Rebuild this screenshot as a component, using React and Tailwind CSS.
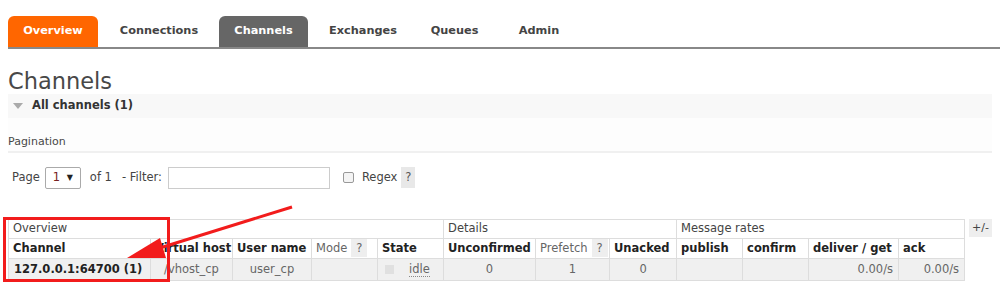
import React from "react";

const tabs = [
  { label: "Overview", ml: "", w: "w-[90px]", cls: "bg-[#ff6600] text-white rounded-t-[6px]" },
  { label: "Connections", ml: "ml-[8px]", w: "w-[106px]", cls: "text-[#444]" },
  { label: "Channels", ml: "ml-[7px]", w: "w-[89px]", cls: "bg-[#666] text-white rounded-t-[6px]" },
  { label: "Exchanges", ml: "ml-[7px]", w: "w-[96px]", cls: "text-[#444]" },
  { label: "Queues", ml: "ml-[8px]", w: "w-[71px]", cls: "text-[#444]" },
  { label: "Admin", ml: "ml-[8px]", w: "w-[82px]", cls: "text-[#444]" },
];

function Help() {
  return (
    <span className="inline-block bg-[#eee] text-[#666] px-[5px] leading-[18px] ml-[4px]">?</span>
  );
}

function Th({ children, weak }) {
  const tone = weak ? "font-normal text-[#666]" : "font-bold text-[#222]";
  return (
    <th className={"border border-[#ddd] bg-white px-[4px] h-[20px] text-left whitespace-nowrap " + tone}>
      {children}
    </th>
  );
}

function Td({ children, align = "text-left", strong }) {
  const tone = strong ? "font-bold text-[#222]" : "text-[#666]";
  return (
    <td className={"border border-[#ddd] bg-[#f0f0f0] px-[5px] h-[22px] whitespace-nowrap " + align + " " + tone}>
      {children}
    </td>
  );
}

export default function App() {
  return (
    <div className="relative w-[1000px] h-[292px] overflow-hidden bg-white font-['DejaVu_Sans',sans-serif] text-[11px] text-[#444]">
      {/* tabs */}
      <div className="flex items-end pt-[16px] border-b-2 border-[#888] ml-[8px]">
        {tabs.map((t) => (
          <div
            key={t.label}
            className={`${t.w} ${t.cls} ${t.ml} h-[31px] flex items-center justify-center font-bold text-[11.3px]`}
          >
            {t.label}
          </div>
        ))}
      </div>

      <div className="px-[8px]">
        <h1 className="text-[22.5px] leading-[26px] text-[#484848] mt-[19px]">Channels</h1>
        <div className="h-[24px] bg-[#f8f8f8] flex items-center">
          <svg width="10" height="6" viewBox="0 0 10 6" className="ml-[5px]">
            <polygon points="0,0 10,0 5,6" fill="#aaa" />
          </svg>
          <span className="ml-[9px] font-bold text-[11.5px] text-[#333]">All channels (1)</span>
        </div>
        <div className="bg-[#fdfdfd] pt-[17px] pb-[2px] border-b-2 border-[#f0f0f0]">
          <div className="leading-[14px] text-[#484848]">Pagination</div>
        </div>

        <div className="flex items-center mt-[13px] h-[23px] text-[#444] text-[11.5px]">
          <span className="ml-[4px]">Page</span>
          <div className="ml-[5px] w-[36px] h-[22px] border border-[#aaa] rounded-[2px] flex items-center px-[7px] justify-between">
            <span className="text-[#722]">1</span>
            <span className="text-[8px] text-[#222]">▼</span>
          </div>
          <span className="ml-[9px]">of 1</span>
          <span className="ml-[10px]">- Filter:</span>
          <div className="ml-[6px] w-[162px] h-[22px] border border-[#ccc]" />
          <div className="ml-[13px] w-[11px] h-[11px] border border-[#999] rounded-[2px] bg-[#f4f4f4]" />
          <span className="ml-[8px]">Regex</span>
          <span className="ml-[4px] bg-[#e8e8e8] text-[#555] w-[14px] h-[21px] flex items-center justify-center">?</span>
        </div>

        {/* table */}
        <div className="flex items-start mt-[30px]">
          <table className="border-collapse table-fixed w-[956px] text-[11.5px]">
            <colgroup>
              <col className="w-[142px]" />
              <col className="w-[82px]" />
              <col className="w-[79px]" />
              <col className="w-[66px]" />
              <col className="w-[66px]" />
              <col className="w-[92px]" />
              <col className="w-[74px]" />
              <col className="w-[67px]" />
              <col className="w-[66px]" />
              <col className="w-[66px]" />
              <col className="w-[90px]" />
              <col className="w-[66px]" />
            </colgroup>
            <thead>
              <tr>
                <th colSpan={5} className="border border-[#ddd] h-[19px] px-[4px] text-left font-normal text-[11.5px] text-[#444]">Overview</th>
                <th colSpan={3} className="border border-[#ddd] h-[19px] px-[4px] text-left font-normal text-[11.5px] text-[#444]">Details</th>
                <th colSpan={4} className="border border-[#ddd] h-[19px] px-[4px] text-left font-normal text-[11.5px] text-[#444]">Message rates</th>
              </tr>
              <tr>
                <Th>Channel</Th>
                <Th>Virtual host</Th>
                <Th>User name</Th>
                <Th weak>
                  Mode<Help />
                </Th>
                <Th>State</Th>
                <Th>Unconfirmed</Th>
                <Th weak>
                  Prefetch<Help />
                </Th>
                <Th>Unacked</Th>
                <Th>publish</Th>
                <Th>confirm</Th>
                <Th>deliver / get</Th>
                <Th>ack</Th>
              </tr>
            </thead>
            <tbody>
              <tr>
                <Td strong>127.0.0.1:64700 (1)</Td>
                <Td align="text-center">/vhost_cp</Td>
                <Td align="text-center">user_cp</Td>
                <Td />
                <Td>
                  <div className="flex items-center">
                    <span className="w-[9px] h-[9px] bg-[#e0e0e0] ml-[2px]" />
                    <span className="ml-[15px] border-b border-dotted border-[#888] leading-[14px]">idle</span>
                  </div>
                </Td>
                <Td align="text-center">0</Td>
                <Td align="text-center">1</Td>
                <Td align="text-center">0</Td>
                <Td />
                <Td />
                <Td align="text-right">0.00/s</Td>
                <Td align="text-right">0.00/s</Td>
              </tr>
            </tbody>
          </table>
          <div className="ml-[4px] w-[28px] h-[18px] bg-[#eee] flex items-center justify-center text-[#444]">+/-</div>
        </div>
      </div>

      {/* annotation: red box + arrow */}
      <div className="absolute left-[3px] top-[217px] w-[167px] h-[65px] border-[3px] border-[#f21c1c]" />
      <svg className="absolute left-0 top-0 pointer-events-none" width="1000" height="292">
        <line x1="292" y1="207" x2="150" y2="251" stroke="#f21c1c" strokeWidth="3" />
        <polygon points="127,258 160,238 166,258" fill="#f21c1c" />
      </svg>
    </div>
  );
}
